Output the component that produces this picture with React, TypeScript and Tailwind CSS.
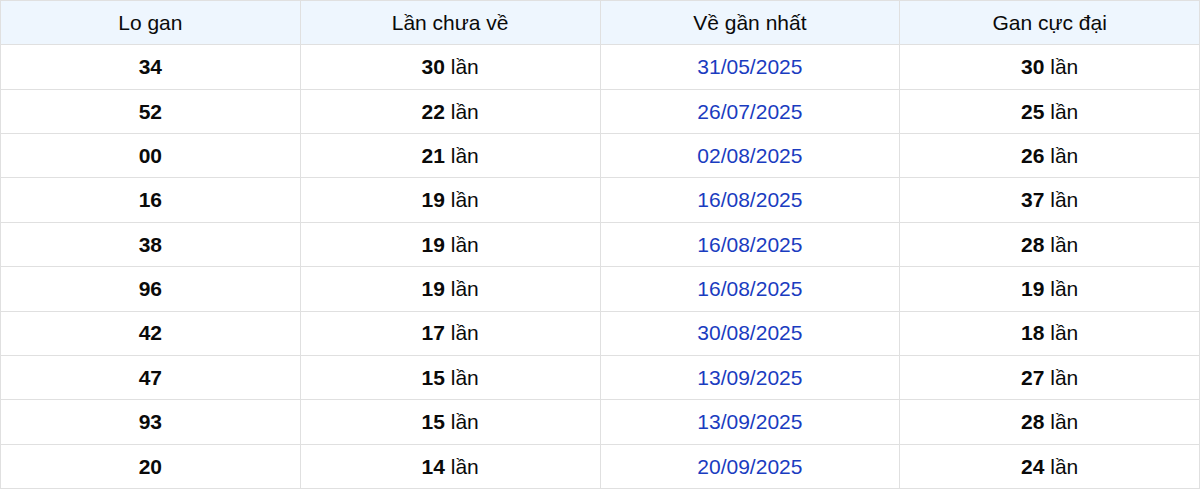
import React from "react";

const rows = [
  ["34", "30", "31/05/2025", "30"],
  ["52", "22", "26/07/2025", "25"],
  ["00", "21", "02/08/2025", "26"],
  ["16", "19", "16/08/2025", "37"],
  ["38", "19", "16/08/2025", "28"],
  ["96", "19", "16/08/2025", "19"],
  ["42", "17", "30/08/2025", "18"],
  ["47", "15", "13/09/2025", "27"],
  ["93", "15", "13/09/2025", "28"],
  ["20", "14", "20/09/2025", "24"],
];

const cell =
  "flex items-center justify-center border-r border-b border-[#e0e0e0] h-[44.36px]";

export default function App() {
  return (
    <div
      className="w-[1200px] bg-white text-[21px] text-[#0a0a0a]"
      style={{ fontFamily: "'Liberation Sans', Arial, sans-serif" }}
    >
      <div className="border-l border-t border-[#e0e0e0]">
        <div className="grid grid-cols-4 bg-[#eef6fe]">
          <div className={cell}>Lo gan</div>
          <div className={cell}>Lần chưa về</div>
          <div className={cell}>Về gần nhất</div>
          <div className={cell}>Gan cực đại</div>
        </div>
        {rows.map((r, i) => (
          <div key={i} className="grid grid-cols-4">
            <div className={cell}>
              <span className="font-bold">{r[0]}</span>
            </div>
            <div className={cell}>
              <span>
                <span className="font-bold">{r[1]}</span> lần
              </span>
            </div>
            <div className={cell}>
              <span className="text-[#1a3cc0]">{r[2]}</span>
            </div>
            <div className={cell}>
              <span>
                <span className="font-bold">{r[3]}</span> lần
              </span>
            </div>
          </div>
        ))}
      </div>
    </div>
  );
}
